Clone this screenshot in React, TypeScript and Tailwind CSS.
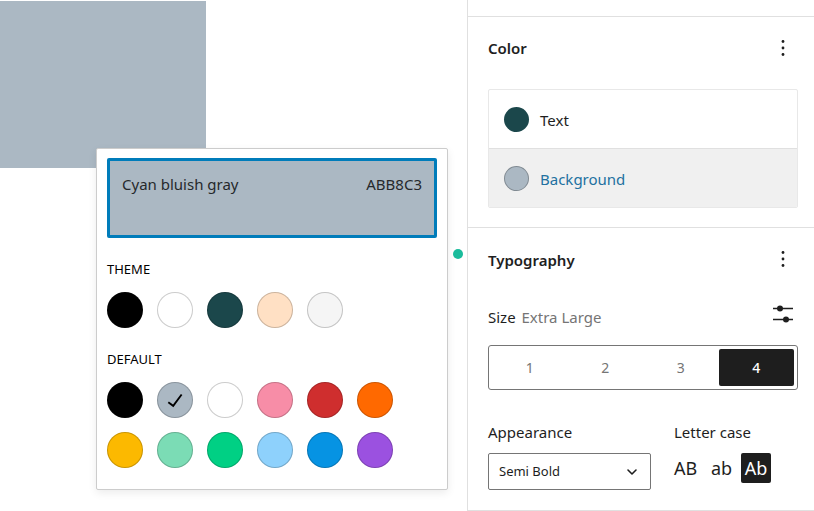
import { ChevronDown } from 'lucide-react'

const font = { fontFamily: '"Noto Sans", sans-serif' }

const theme = ['#000000', '#ffffff', '#1b474b', '#ffe0c4', '#f5f5f5']
const defaults = [
  '#000000', '#abb8c3', '#ffffff', '#f78da7', '#cf2e2e', '#ff6900',
  '#fcb900', '#7bdcb5', '#00d084', '#8ed1fc', '#0693e3', '#9b51e0',
]

const Swatch = ({ color, checked }: { color: string; checked?: boolean }) => (
  <div
    className="flex h-[36px] w-[36px] items-center justify-center rounded-full border border-black/20"
    style={{ backgroundColor: color }}
  >
    {checked && (
      <svg width="30" height="30" viewBox="0 0 24 24" fill="#000" className="shrink-0">
        <path d="M16.7 7.1l-6.3 8.5-3.3-2.5-.9 1.2 4.5 3.4L17.9 8z" />
      </svg>
    )}
  </div>
)

const Kebab = () => (
  <svg width="24" height="24" viewBox="0 0 24 24" fill="#1e1e1e">
    <circle cx="12" cy="5.5" r="1.4" />
    <circle cx="12" cy="12" r="1.4" />
    <circle cx="12" cy="18.5" r="1.4" />
  </svg>
)

const SliderIcon = () => (
  <svg width="24" height="24" viewBox="0 0 24 24" fill="none">
    <path d="M2 6.5h20M2 17.5h20" stroke="#1e1e1e" strokeWidth="1.5" />
    <circle cx="9" cy="6.5" r="3" fill="#1e1e1e" />
    <circle cx="15" cy="17.5" r="3" fill="#1e1e1e" />
  </svg>
)

const App = () => (
  <div className="flex h-[511px] w-[814px] overflow-hidden bg-white text-[#1e1e1e]" style={font}>
    {/* canvas */}
    <div className="relative h-full w-[468px] shrink-0 border-r border-[#e0e0e0]">
      <div className="mt-px h-[167px] w-[206px] bg-[#abb8c3]" />
      <div className="absolute left-[96px] top-[148px] h-[342px] w-[352px] rounded-[2px] border border-[#ccc] bg-white px-[10px] pt-[9px] shadow-[0_3px_8px_rgba(0,0,0,0.08)]">
        <div className="flex h-[80px] items-start justify-between rounded-[2px] border-[3px] border-[#007cba] bg-[#abb8c3] px-3 pt-[13px] text-[15px] leading-5 text-[#26292c]">
          <span>Cyan bluish gray</span>
          <span>ABB8C3</span>
        </div>
        <div className="mt-[21px] text-[13px] leading-5 text-black">THEME</div>
        <div className="mt-[13px] flex gap-[14px]">
          {theme.map(c => <Swatch key={c} color={c} />)}
        </div>
        <div className="mt-[21px] text-[13px] leading-5 text-black">DEFAULT</div>
        <div className="mt-[13px] grid w-[286px] grid-cols-6 gap-x-[14px] gap-y-[14px]">
          {defaults.map(c => <Swatch key={c} color={c} checked={c === '#abb8c3'} />)}
        </div>
      </div>
      <div className="absolute left-[453px] top-[249px] h-[10px] w-[10px] rounded-full bg-[#1abc9c]" />
    </div>

    {/* sidebar */}
    <div className="w-[346px] shrink-0">
      <div className="h-[17px] border-b border-[#e0e0e0]" />

      <section className="h-[211px] border-b border-[#e0e0e0] pl-5 pr-4">
        <div className="flex h-[66px] items-center justify-between">
          <h2 className="mt-[-3px] text-[15px] font-semibold">Color</h2>
          <div className="mr-[3px] mt-[-4px]"><Kebab /></div>
        </div>
        <div className="mt-[6px] overflow-hidden rounded-[2px] border border-[#e8e8e8]">
          <div className="flex h-[59px] items-center gap-[11px] border-b border-[#e0e0e0] px-[15px] text-[15px]">
            <div className="h-[25px] w-[25px] rounded-full bg-[#1b474b]" />
            <span className="mt-[3px]">Text</span>
          </div>
          <div className="flex h-[58px] items-center gap-[11px] bg-[#f0f0f0] px-[15px] text-[15px] text-[#2271a0]">
            <div className="h-[25px] w-[25px] rounded-full border border-black/25 bg-[#abb8c3]" />
            <span className="mt-[3px]">Background</span>
          </div>
        </div>
      </section>

      <section className="h-[283px] border-b border-[#e0e0e0] pl-5 pr-4">
        <div className="flex h-[66px] items-center justify-between">
          <h2 className="mt-[-1px] text-[15px] font-semibold">Typography</h2>
          <div className="mr-[3px] mt-[-4px]"><Kebab /></div>
        </div>
        <div className="mt-[11px] flex h-[24px] items-center justify-between">
          <div className="text-[15px]">
            Size <span className="ml-[2px] text-[#757575]">Extra Large</span>
          </div>
          <div className="mr-[3px] mt-[-6px]"><SliderIcon /></div>
        </div>
        <div className="mt-[16px] grid h-[45px] grid-cols-4 rounded-[3px] border border-[#757575] p-[3px] text-[14px]">
          <div className="flex items-center justify-center text-[#757575]">1</div>
          <div className="flex items-center justify-center text-[#757575]">2</div>
          <div className="flex items-center justify-center text-[#757575]">3</div>
          <div className="flex items-center justify-center rounded-[2px] bg-[#1e1e1e] font-medium text-white">4</div>
        </div>
        <div className="mt-[32px] flex">
          <div className="w-[186px]">
            <div className="text-[15px] leading-5">Appearance</div>
            <div className="mt-[11px] flex h-[37px] w-[163px] items-center justify-between rounded-[2px] border border-[#757575] pl-[10px] pr-[10px] text-[13px]">
              <span>Semi Bold</span>
              <ChevronDown className="h-4 w-4" strokeWidth={2.4} />
            </div>
          </div>
          <div>
            <div className="text-[15px] leading-5">Letter case</div>
            <div className="mt-[11px] flex h-[30px] items-center text-[18px]">
              <span className="w-[37px]">AB</span>
              <span className="w-[30px]">ab</span>
              <span className="flex h-[30px] w-[30px] items-center justify-center rounded-[2px] bg-[#1e1e1e] text-white">Ab</span>
            </div>
          </div>
        </div>
      </section>
    </div>
  </div>
)

export default App
